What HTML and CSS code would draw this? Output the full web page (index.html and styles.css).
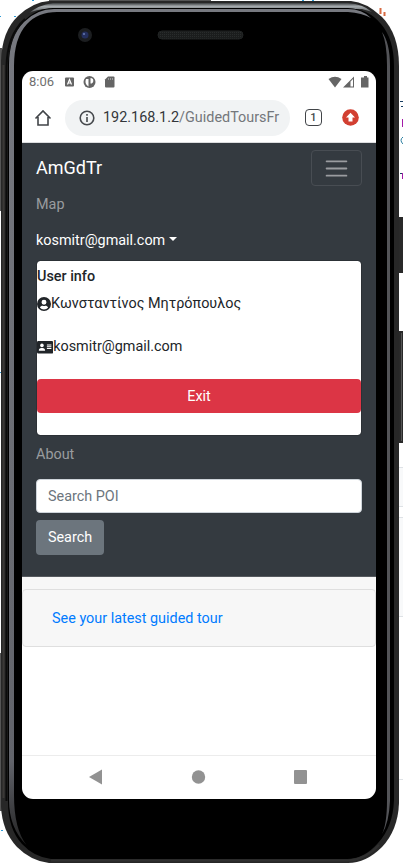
FILE: index.html
```
<!DOCTYPE html>
<html lang="en">
<head>
<meta charset="utf-8">
<title>AmGdTr</title>
<link rel="stylesheet" href="styles.css">
</head>
<body>
<div class="device">
  <svg class="frame" width="403" height="864" viewBox="0 0 403 864" aria-hidden="true">
    <defs>
      <linearGradient id="top" x1="0" y1="0" x2="0" y2="1">
        <stop offset="0" stop-color="#3a3d3f"/><stop offset=".3" stop-color="#a6abae"/><stop offset=".65" stop-color="#777b7e"/><stop offset="1" stop-color="#111"/>
      </linearGradient>
      <linearGradient id="shine" x1="0" y1="0" x2="0" y2="1">
        <stop offset="0" stop-color="#777980"/><stop offset=".9" stop-color="#62646b"/><stop offset="1" stop-color="#222"/>
      </linearGradient>
      <pattern id="mesh" width="2" height="2" patternUnits="userSpaceOnUse">
        <rect width="2" height="2" fill="#1b1d1d"/><rect width="1" height="1" fill="#292c2c"/>
      </pattern>
    </defs>
    <path d="M49 0H211V2H49zM0 48H2V211H0zM0 653H2V811H0z" fill="#555"/>
    <path d="M398 467.500h5M398 506.500h5M398 517.500h5M398 616.500h5M398 779.500h5" stroke="#dee2e6"/>
    <path d="M399 468h4v38h-4zM399 518h4v98h-4z" fill="#f8f9fa"/>
    <rect x="398" y="217" width="7" height="56" rx="1" fill="#292929"/>
    <rect x="398" y="331" width="7" height="112" rx="1" fill="#292929"/>
    <path d="M401.500 333V441" stroke="#555"/>
    <path d="M32 .5h2M302 .5h2M312 .5h2M0 16.500h1M14 16.500h2M0 372.500h1M1 830.500h2" stroke="#2e9bd6"/>
    <path d="M380.500 8v6M384.500 12v4" stroke="#d76a42" stroke-width="2"/>
    <path d="M400 101.500h3M401 106.500h2M400 173.500h3" stroke="#173d61"/>
    <path d="M402.500 119v8M402.500 173v6" stroke="#a31ba8"/>
    <path d="M403 137q-4 3 0 7" fill="none" stroke="#287da0"/>
    <path d="M49 1H351Q366 2 382 17Q399 34 399 66V803Q398 830 382 847Q366 863 348 863H49Q31 861 17 847Q2 831 1 806V61Q2 31 18 16Q33 2 49 1Z" fill="#272727"/>
    <path d="M6.500 801V67Q7 35 25 19" fill="none" stroke="#0b0b0b" stroke-width="2"/>
    <path d="M3.500 798V65" stroke="#3b3937" stroke-width="2"/>
    <path d="M28 14Q38 5 53 3H348Q363 4 372 12L362 9H48Q36 9 28 14Z" fill="url(#top)"/>
    <path d="M53 8H348Q369 9 381 24Q394 39 394 66V800Q393 827 378 843Q364 859 347 859H51Q34 857 22 844Q8 829 8 801V64Q9 37 23 22Q36 8 53 8Z" fill="#000"/>
    <path d="M26.500 845Q9 828 9 800V65Q9 37 24 22Q37 9 54 9H348Q362 9 371 18Q362 13 348 12H57Q38 12 27 24Q14 38 14 66V795Q14 829 26.500 845Z" fill="url(#shine)"/>
    <path d="M382 32Q390 43 390 66V801Q389 823 382 834Q387 824 387 800V65Q387 44 382 32Z" fill="#535458"/>
    <path d="M51 860.500H348Q365 860 379 845" fill="none" stroke="#303030" stroke-width="2"/>
    <circle cx="85" cy="35" r="7" fill="#1c1e20"/><circle cx="85" cy="35" r="3.500" fill="#242f5d"/><circle cx="84" cy="34" r="1" fill="#667bb2"/>
    <rect x="158" y="31" width="85" height="8" rx="4" fill="url(#mesh)" stroke="#202323"/>
  </svg>

  <div class="screen">
    <header class="statusbar">
      <span class="clock">8:06</span>
      <svg class="notifications" width="52" height="14" viewBox="0 0 52 14">
        <rect x="1" y="2.500" width="9" height="9" rx="1" fill="#656565"/><path d="M3.500 9.500L5.500 4.500L7.500 9.500M4.500 8h2" fill="none" stroke="#fff" stroke-width="1.200"/>
        <circle cx="25.500" cy="7" r="6" fill="#656565"/><path d="M26.500 3a2.700 2.700 0 0 1 0 5.600V3zM22 4h2.500v7.500Q20 9 22 4z" fill="#fff"/>
        <path d="M44 1.500h5.500q1 0 1 1v9q0 1-1 1h-7.500q-1 0-1-1V4.500z" fill="#656565"/><path d="M44.500 3v2M46.500 3v2M48.500 3v2" stroke="#aaa" stroke-width=".8"/>
      </svg>
      <svg class="signals" width="42" height="14" viewBox="0 0 42 14">
        <path d="M.5 4Q7 -.5 13.500 4L7 12.500z" fill="#656565"/><path d="M15 12.500L26 1.500v11zM22.500 6.500v5H25V4z" fill="#656565" fill-rule="evenodd"/>
        <path d="M34 2.500h2V1h3v1.500h1.500v10H33V2.500z" fill="#656565"/>
      </svg>
    </header>

    <div class="toolbar">
      <svg class="home" width="18" height="18" viewBox="0 0 18 18"><path d="M1.500 9.500L9 2l7.500 7.500M4 8v8h10V8" fill="none" stroke="#414448" stroke-width="1.600"/></svg>
      <div class="address">
        <svg width="16" height="16" viewBox="0 0 16 16"><circle cx="8" cy="8" r="6.800" fill="none" stroke="#46494d" stroke-width="1.600"/><path d="M8 7v5M8 4v1.700" stroke="#46494d" stroke-width="1.600"/></svg>
        <span class="url">192.168.1.2<i>/GuidedToursFr</i></span>
      </div>
      <span class="tabs">1</span>
      <svg class="update" width="17" height="17" viewBox="0 0 17 17"><circle cx="8.500" cy="8.500" r="8.300" fill="#d23f31"/><path d="M8.500 3.700L13 8.500h-2.500V12.500h-4V8.500H4z" fill="#fff"/></svg>
    </div>

    <nav class="navbar">
      <div class="navhead">
        <a class="brand">AmGdTr</a>
        <button class="toggler" aria-label="Menu"><svg width="27" height="27" viewBox="0 0 30 30"><path d="M4 7h22M4 15h22M4 23h22" stroke="#9a9ca0" stroke-width="2" stroke-linecap="round"/></svg></button>
      </div>
      <a class="navlink">Map</a>
      <a class="navlink active">kosmitr@gmail.com<span class="caret"></span></a>
      <section class="menu">
        <h6>User info</h6>
        <p><svg width="14" height="14" viewBox="0 0 496 496"><path fill="#212529" d="M248 0a248 248 0 1 0 0 496a248 248 0 1 0 0-496zm0 96a88 88 0 1 1 0 176a88 88 0 1 1 0-176zm0 344c-59 0-111-27-146-68c19-36 56-60 99-60c11 2 24 8 47 8s36-6 47-8c43 0 80 24 99 60c-35 41-87 68-146 68z"/></svg>Κωνσταντίνος Μητρόπουλος</p>
        <p class="mail"><svg width="16.200" height="14.400" viewBox="0 0 18 16"><path d="M1.500 1h15Q18 1 18 2.500v11Q18 15 16.500 15h-15Q0 15 0 13.500v-11Q0 1 1.500 1z" fill="#212529"/><circle cx="5.500" cy="6" r="2" fill="#fff"/><path d="M2 12q0-3 3-3h1q3 0 3 3zM11 5h5v1h-5zM11 7h5v1h-5zM11 9h5v1h-5z" fill="#fff"/></svg>kosmitr@gmail.com</p>
        <button class="exit">Exit</button>
      </section>
      <a class="navlink">About</a>
      <form class="search">
        <input type="text" placeholder="Search POI">
        <button type="button">Search</button>
      </form>
    </nav>

    <main>
      <div class="card"><a>See your latest guided tour</a></div>
    </main>

    <footer class="keys">
      <svg width="354" height="43" viewBox="0 0 354 43"><path d="M67 21L80 13.500v15z" fill="#929292"/><circle cx="176.500" cy="21" r="6.700" fill="#929292"/><rect x="272" y="14" width="13" height="14" rx="1" fill="#929292"/></svg>
    </footer>
  </div>
</div>
</body>
</html>
```
FILE: styles.css
```
* { box-sizing: border-box; }
body { margin: 0; background: #fff; overflow: hidden; font: 14.4px/21.6px Roboto, sans-serif; color: #212529; }
button, input { font: inherit; }
.device { position: relative; width: 403px; height: 864px; padding: 71px 27px 65px 22px; }
.frame { position: absolute; inset: 0; }
.screen { position: relative; width: 354px; height: 728px; border-radius: 11px; overflow: hidden; background: #fff; display: flex; flex-direction: column; }
.statusbar { height: 22px; flex: none; display: flex; align-items: center; padding: 0 6px 0 7px; }
.clock { font-size: 13px; color: #707070; width: 35px; }
.notifications { flex: none; }
.signals { margin-left: auto; }
.toolbar { height: 50px; flex: none; display: flex; align-items: center; padding: 0 17px 0 12px; border-bottom: 1px solid #dcdddf; }
.home { flex: none; }
.address { width: 225px; height: 36px; margin-left: 13px; padding-left: 14px; border-radius: 18px; background: #f1f3f4; display: flex; align-items: center; gap: 8px; overflow: hidden; }
.address svg { flex: none; }
.url { padding-top: 1px; font-size: 14.4px; color: #33363a; white-space: nowrap; }
.url i { font-style: normal; color: #74777b; }
.tabs { width: 17px; height: 17px; margin-left: 15px; border: 1.8px solid #414448; border-radius: 4px; font-size: 11px; font-weight: 500; line-height: 15px; text-align: center; color: #414448; }
.update { margin-left: auto; }
.navbar { height: 434px; flex: none; padding: 7px 14px 0; background: #343a40; border-bottom: 1px solid #55595e; }
.navhead { height: 36px; display: flex; align-items: center; justify-content: space-between; }
.brand { font-size: 18px; color: #fff; }
.toggler { width: 51px; height: 36px; padding: 0; border: 1px solid #484d53; border-radius: 4px; background: none; display: flex; align-items: center; justify-content: center; }
.navlink { display: block; height: 36px; padding: 8px 0 6px; color: #999c9f; }
.active { color: #fff; }
.caret { display: inline-block; margin-left: 4px; vertical-align: 3.600px; border: 4.300px solid transparent; border-top-color: #fff; border-bottom: 0; }
.menu { height: 176px; margin: 2px 0 0; padding: 6px 0 0; border: 1px solid #2c3136; border-radius: 4px; background: #fff; background-clip: padding-box; }
h6 { margin: 0; font-size: 14.4px; font-weight: 500; line-height: 20px; }
.menu p { margin: 6px 0 21px; height: 22px; display: flex; align-items: center; }
.exit { display: block; width: 100%; height: 34px; padding: 1px 0 0; border: 0; border-radius: 4px; background: #dc3545; color: #fff; }
.search { display: flex; flex-direction: column; align-items: flex-start; gap: 7px; padding-top: 7px; }
.search input { width: 100%; height: 34px; padding: 0 11px; border: 1px solid #ced4da; border-radius: 4px; background: #fff; }
.search input::placeholder { color: #6c757d; opacity: 1; }
.search button { width: 68px; height: 35px; padding: 0; border: 0; border-radius: 4px; background: #6c757d; color: #fff; }
main { flex: 1; display: flow-root; background: linear-gradient(#f7f7f7 14px, #fff 14px); }
.card { height: 58px; margin-top: 12px; padding: 18px 29px; border: 1px solid #dfdfdf; border-radius: 4px; background: #f7f7f7; }
.card a { color: #007bff; }
.keys { height: 44px; flex: none; border-top: 1px solid #ececec; }
.keys svg { display: block; }
```
